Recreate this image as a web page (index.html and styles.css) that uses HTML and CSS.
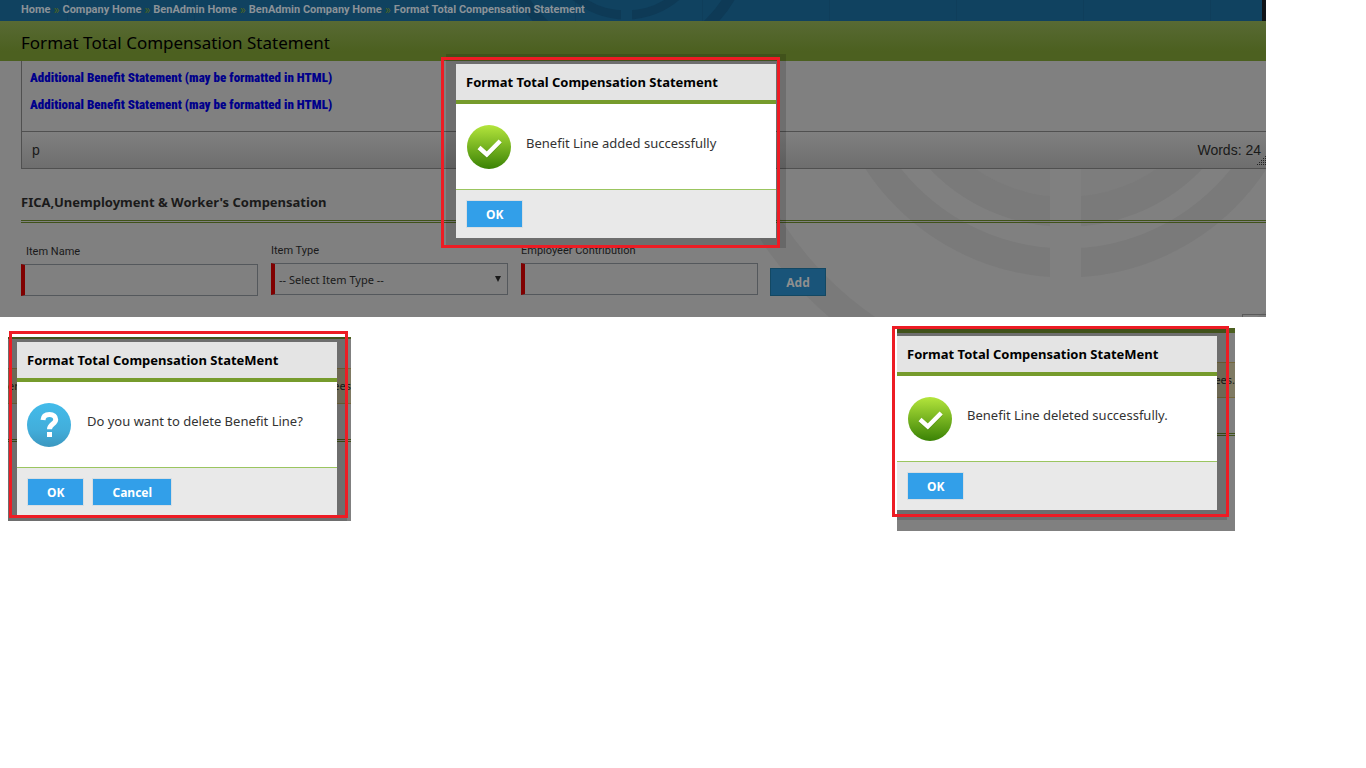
FILE: index.html
```html
<!DOCTYPE html>
<html lang="en">
<head>
  <meta charset="UTF-8">
  <meta name="viewport" content="width=device-width, initial-scale=1.0">
  <title>Format Total Compensation Statement</title>
  <link rel="stylesheet" href="styles.css">
</head>
<body>
  <!-- shared icons -->
  <svg class="defs" width="0" height="0" aria-hidden="true">
    <linearGradient id="green" x1="0" y1="0" x2="0" y2="1">
      <stop offset="0" stop-color="#b4e53c"/>
      <stop offset="1" stop-color="#3a8205"/>
    </linearGradient>
    <linearGradient id="blue" x1="0" y1="0" x2="0" y2="1">
      <stop offset="0" stop-color="#43bbea"/>
      <stop offset="0.6" stop-color="#42aedb"/>
      <stop offset="1" stop-color="#3b97c0"/>
    </linearGradient>
    <symbol id="icon-success" viewBox="0 0 44 44">
      <circle cx="22" cy="22" r="22" fill="url(#green)"/>
      <path d="M12 22.500l7.800 7L33.200 16" fill="none" stroke="#2f6d04" stroke-opacity=".3" stroke-width="4.400" transform="translate(0 1)"/>
      <path d="M12 22.500l7.800 7L33.200 16" fill="none" stroke="#fff" stroke-width="4.400"/>
    </symbol>
    <symbol id="icon-question" viewBox="0 0 44 44">
      <circle cx="22" cy="22" r="22" fill="url(#blue)"/>
      <path d="M16 17c.2-3.700 2.500-5.600 6.500-5.600s6.200 2 6.200 5.100c0 4.600-6.200 4.600-6.200 9.800" fill="none" stroke="#fff" stroke-width="5"/>
      <rect x="20" y="29" width="5" height="5" fill="#fff"/>
    </symbol>
  </svg>

  <main class="page">
    <nav class="breadcrumb">
      <svg class="nav-rings" width="220" height="21" viewBox="0 0 220 21" aria-hidden="true">
        <g fill="none" stroke="#0e3a56">
          <circle cx="110" cy="-63" r="78" stroke-width="9"/>
          <circle cx="110" cy="-63" r="120" stroke-width="11"/>
        </g>
        <rect x="105" width="11" height="21" fill="#104260"/>
      </svg>
      <a href="#">Home</a><span>»</span>
      <a href="#">Company Home</a><span>»</span>
      <a href="#">BenAdmin Home</a><span>»</span>
      <a href="#">BenAdmin Company Home</a><span>»</span>
      <a href="#">Format Total Compensation Statement</a>
    </nav>
    <h1 class="page-title">Format Total Compensation Statement</h1>

    <div class="content">
      <svg class="rings" width="560" height="148" viewBox="706 169 560 148" aria-hidden="true">
        <circle cx="1066" cy="38" r="159" fill="#7d7d7d"/>
        <g fill="none" stroke="#7a7a7a">
          <circle cx="1066" cy="38" r="174" stroke-width="30"/>
          <circle cx="1066" cy="38" r="225" stroke-width="29"/>
          <circle cx="1066" cy="38" r="352" stroke-width="28"/>
        </g>
        <rect x="1050" y="169" width="31" height="110" fill="#808080"/>
      </svg>

      <div class="editor">
        <div class="editor-body">
          <p>Additional Benefit Statement (may be formatted in HTML)</p>
          <p>Additional Benefit Statement (may be formatted in HTML)</p>
        </div>
        <div class="statusbar">
          <span>p</span>
          <span>Words: 24</span>
          <svg class="grip" width="9" height="9" viewBox="0 0 9 9" aria-hidden="true">
            <path d="M8 0h1v1h-1zM6 2h1v1h-1zM8 2h1v1h-1zM4 4h1v1h-1zM6 4h1v1h-1zM8 4h1v1h-1zM2 6h1v1h-1zM4 6h1v1h-1zM6 6h1v1h-1zM8 6h1v1h-1zM0 8h1v1h-1zM2 8h1v1h-1zM4 8h1v1h-1zM6 8h1v1h-1zM8 8h1v1h-1z" fill="#222"/>
          </svg>
        </div>
      </div>

      <h2 class="section-title">FICA,Unemployment &amp; Worker's Compensation</h2>

      <form class="item-form">
        <div class="field field-name">
          <label for="item-name">Item Name</label>
          <input type="text" id="item-name">
        </div>
        <div class="field">
          <label for="item-type">Item Type</label>
          <div class="select-wrap">
            <select id="item-type">
              <option>-- Select Item Type --</option>
            </select>
          </div>
        </div>
        <div class="field">
          <label for="contribution">Employeer Contribution</label>
          <input type="text" id="contribution">
        </div>
        <button type="button" class="btn-add">Add</button>
      </form>
      <div class="corner"></div>
    </div>

    <div class="halo halo-added">
      <section class="dialog">
        <h3>Format Total Compensation Statement</h3>
        <div class="dialog-body">
          <svg class="icon" width="44" height="44"><use href="#icon-success"/></svg>
          <p>Benefit Line added successfully</p>
        </div>
        <div class="dialog-footer"><button type="button">OK</button></div>
      </section>
    </div>
    <div class="marker marker-added"></div>
  </main>

  <div class="shots">
    <div class="shot shot-confirm">
      <div class="clip">
        <div class="strip"></div>
        <div class="notice"><span>er</span><span>ees</span></div>
        <div class="rule"></div>
        <div class="halo">
          <section class="dialog">
            <h3>Format Total Compensation StateMent</h3>
            <div class="dialog-body">
              <svg class="icon" width="44" height="44"><use href="#icon-question"/></svg>
              <p>Do you want to delete Benefit Line?</p>
            </div>
            <div class="dialog-footer">
              <button type="button">OK</button>
              <button type="button">Cancel</button>
            </div>
          </section>
        </div>
      </div>
      <div class="marker"></div>
    </div>

    <div class="shot shot-deleted">
      <div class="clip">
        <div class="strip"></div>
        <div class="notice"><span></span><span>ees.</span></div>
        <div class="rule"></div>
        <div class="halo">
          <section class="dialog">
            <h3>Format Total Compensation StateMent</h3>
            <div class="dialog-body">
              <svg class="icon" width="44" height="44"><use href="#icon-success"/></svg>
              <p>Benefit Line deleted successfully.</p>
            </div>
            <div class="dialog-footer"><button type="button">OK</button></div>
          </section>
        </div>
      </div>
      <div class="marker"></div>
    </div>
  </div>
</body>
</html>
```

FILE: styles.css
```css
:root {
  --page-bg: #808080;
  --line: #54585c;
  --green-dark: #40521a;
  --green: #769b2c;
  --blue: #329fe9;
  --red: #ed1c24;
}

* {
  box-sizing: border-box;
}

body {
  margin: 0;
  background: #fff;
  color: #1a1a1a;
  font-family: "Noto Sans", "Open Sans", sans-serif;
}

h1, h2, h3, p {
  margin: 0;
}

.defs {
  position: absolute;
}

.page {
  position: relative;
  margin-right: 100px;
  background: var(--page-bg);
}

/* top bar */
.breadcrumb {
  position: relative;
  display: flex;
  height: 21px;
  padding-left: 21px;
  border-right: 4px solid #101418;
  background: repeating-linear-gradient(90deg, transparent 0 67px, #0f3e5b 67px 68px, transparent 68px 127px) #104260;
  font-family: Roboto, "Noto Sans", sans-serif;
  font-size: 11px;
  line-height: 20px;
  font-weight: bold;
}

.breadcrumb a {
  position: relative;
  color: #8b9298;
  text-decoration: none;
}

.breadcrumb span {
  width: 12px;
  text-align: center;
  color: #4c6420;
  font-size: 13px;
  font-weight: normal;
}

.nav-rings {
  position: absolute;
  left: 516px;
  top: 0;
}

.page-title {
  height: 40px;
  padding-left: 21px;
  background: linear-gradient(#586a34, #4c6020 75%);
  color: #000;
  font-size: 17px;
  font-weight: normal;
  line-height: 43px;
}

.content {
  position: relative;
  padding: 0 0 21px 21px;
  overflow: hidden;
}

.rings {
  position: absolute;
  right: 0;
  bottom: 0;
}

/* editor */
.editor {
  position: relative;
  border-left: 1px solid #505050;
}

.editor-body {
  height: 70px;
  padding: 3px 8px;
  color: #00008b;
  font-family: Impact, "Roboto Condensed", "Liberation Sans", sans-serif;
  font-size: 13px;
  font-weight: 900;
  line-height: 27px;
}

.statusbar {
  position: relative;
  display: flex;
  justify-content: space-between;
  height: 38px;
  padding: 0 5px 0 10px;
  border-top: 1px solid #505050;
  border-bottom: 1px solid #505050;
  background: linear-gradient(#808080, #6e6e6e);
  font-family: "Liberation Sans", Arial, sans-serif;
  font-size: 14px;
  line-height: 36px;
}

.grip {
  position: absolute;
  right: 0;
  bottom: 3px;
}

.section-title {
  position: relative;
  height: 54px;
  border-bottom: 3px double var(--green-dark);
  font-size: 13px;
  line-height: 66px;
}

/* item form */
.item-form {
  position: relative;
  display: flex;
  align-items: flex-end;
  gap: 13px;
  padding-top: 20px;
}

.field {
  display: flex;
  flex-direction: column;
  width: 237px;
  margin-bottom: 1px;
}

.field-name {
  margin-bottom: 0;
}

.field-name label {
  padding-left: 5px;
}

.field label {
  height: 20px;
  font-family: Roboto, "Noto Sans", sans-serif;
  font-size: 11px;
  line-height: 16px;
}

.field input,
.field select {
  width: 100%;
  height: 32px;
  padding: 0 4px;
  border: 1px solid var(--line);
  border-left: 4px solid #800000;
  border-radius: 0;
  background: transparent;
  color: #1a1a1a;
  font-family: inherit;
  font-size: 11px;
  appearance: none;
}

.select-wrap {
  position: relative;
}

.select-wrap::after {
  content: "";
  position: absolute;
  right: 7px;
  top: 13px;
  border: 3px solid transparent;
  border-top: 6px solid #1a1a1a;
}

.btn-add {
  width: 56px;
  height: 28px;
  margin-left: -1px;
  padding: 0;
  border: 1px solid #134863;
  background: #195479;
  color: #8f8f8f;
  font-family: inherit;
  font-size: 12px;
  font-weight: bold;
}

.corner {
  position: absolute;
  right: 0;
  bottom: 0;
  width: 24px;
  height: 3px;
  border-top: 1px solid #5a5a5a;
  border-left: 1px solid #5a5a5a;
}

/* dialogs */
.halo {
  position: absolute;
  width: 340px;
  padding: 10px;
  background: rgba(0, 0, 0, 0.14);
}

.halo-added {
  left: 446px;
  top: 54px;
}

.dialog {
  background: #fff;
}

.dialog h3 {
  height: 40px;
  padding-left: 10px;
  border-bottom: 4px solid var(--green);
  background: #e4e4e4;
  color: #000;
  font-size: 13px;
  line-height: 36px;
}

.dialog-body {
  display: flex;
  gap: 15px;
  height: 85px;
  padding: 21px 11px;
}

.shot-confirm .dialog-body {
  gap: 16px;
  padding-left: 10px;
}

.dialog-body p {
  color: #333;
  font-size: 13px;
  line-height: 36px;
}

.dialog-footer {
  display: flex;
  gap: 8px;
  height: 49px;
  padding: 10px;
  border-top: 1px solid #9bc560;
  background: #e9e9e9;
}

.dialog-footer button {
  height: 28px;
  padding: 0 19px;
  border: 1px solid #d8dee2;
  background: var(--blue);
  color: #fff;
  font-family: inherit;
  font-size: 12px;
  font-weight: bold;
}

.marker {
  position: absolute;
  border: 3px solid var(--red);
}

.marker-added {
  left: 441px;
  top: 57px;
  width: 339px;
  height: 191px;
}

/* lower captures */
.shots {
  display: flex;
  justify-content: space-between;
  align-items: flex-start;
  padding: 11px 131px 0 8px;
}

.shot {
  position: relative;
}

.clip {
  position: relative;
  overflow: hidden;
  background: var(--page-bg);
}

.strip {
  height: 5px;
  background: #4c6020;
}

.notice {
  display: flex;
  justify-content: space-between;
  height: 36px;
  margin-top: 29px;
  border: solid #75683c;
  border-width: 1px 0;
  background: #7f7a63;
  font-size: 11px;
  line-height: 34px;
}

.rule {
  margin-top: 35px;
  border-bottom: 3px double var(--green-dark);
}

.shot-confirm {
  width: 343px;
  margin-top: 9px;
}

.shot-confirm .clip {
  height: 184px;
}

.shot-confirm .strip {
  height: 2px;
}

.shot-confirm .halo {
  left: -1px;
  top: -5px;
}

.shot-confirm .marker {
  left: 1px;
  top: -6px;
  width: 339px;
  height: 187px;
}

.shot-deleted {
  width: 338px;
}

.shot-deleted .clip {
  height: 203px;
}

.shot-deleted .halo {
  left: -10px;
  top: -2px;
}

.shot-deleted .marker {
  left: -5px;
  top: -2px;
  width: 337px;
  height: 191px;
}
```
